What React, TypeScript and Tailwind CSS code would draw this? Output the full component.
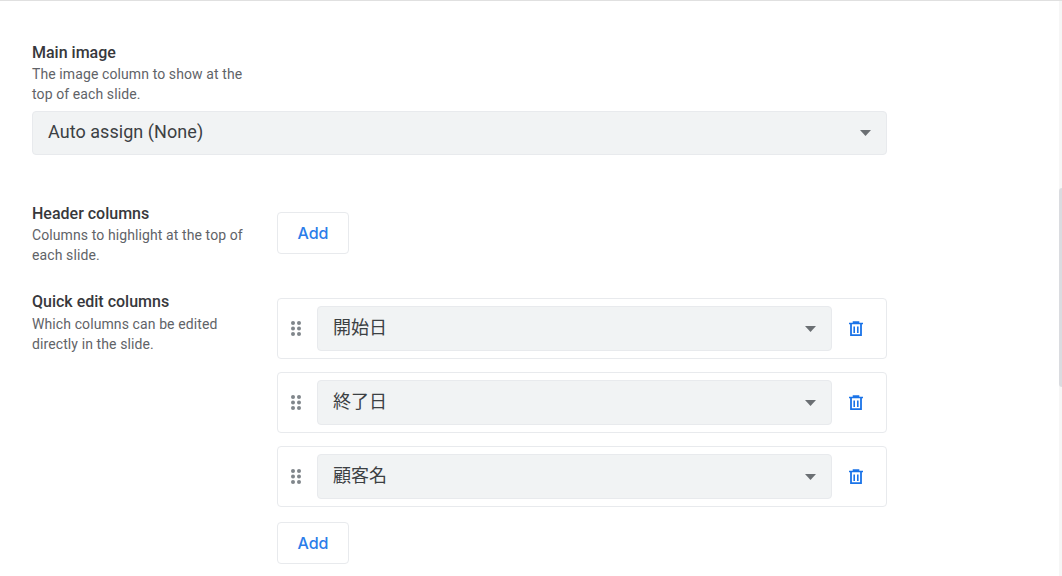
import React from 'react';

function Caret() {
  return (
    <svg width="11" height="6" viewBox="0 0 11 6" className="shrink-0">
      <path d="M0 0h11L5.5 6z" fill="#6b6f73" />
    </svg>
  );
}

function Select({ label, className, textClass }: { label: string; className: string; textClass: string }) {
  return (
    <div className={`flex items-center justify-between bg-[#f1f3f4] border border-[#e8eaed] rounded px-[15px] text-[#3c4043] text-[18px] tracking-[0.05px] ${className}`}>
      <span className={textClass}>{label}</span>
      <Caret />
    </div>
  );
}

function AddButton() {
  return (
    <button
      className="w-[72px] h-[42px] bg-white border border-[#e8eaed] rounded text-[16px] font-medium text-[#2b7de9]"
      style={{ fontFamily: 'Inter, sans-serif' }}
    >
      Add
    </button>
  );
}

function Label({ title, desc, gap }: { title: string; desc: string[]; gap: string }) {
  return (
    <div>
      <div className="text-[16px] leading-5 font-medium text-[#37383c]">{title}</div>
      <div className={`${gap} text-[14px] leading-5 tracking-[0.1px] text-[#5f6368]`}>
        {desc.map((d) => (
          <div key={d}>{d}</div>
        ))}
      </div>
    </div>
  );
}

function Handle() {
  return (
    <svg width="10" height="15" viewBox="0 0 10 15" className="shrink-0">
      {[2, 7.5, 13].map((y) =>
        [2, 8].map((x) => <circle key={`${x}-${y}`} cx={x} cy={y} r="2" fill="#80868b" />)
      )}
    </svg>
  );
}

function Trash() {
  return (
    <svg width="14" height="16" viewBox="0 0 14 16" fill="none" stroke="#1a73e8" className="shrink-0">
      <path d="M0 2.5h14M4.5 2.5V1h5v1.5" strokeWidth="1.6" />
      <path d="M2 3v11.2h10V3" strokeWidth="1.8" />
      <path d="M5.2 5.5v6.5M8.8 5.5v6.5" strokeWidth="1.6" />
    </svg>
  );
}

function ColumnRow({ name }: { name: string }) {
  return (
    <div className="flex items-center h-[61px] bg-white border border-[#e8eaed] rounded pl-[13px] pr-[23px]">
      <Handle />
      <Select label={name} textClass="pb-[2px]" className="flex-1 h-[45px] ml-[16px] mr-[17px]" />
      <Trash />
    </div>
  );
}

export default function App() {
  return (
    <div
      className="flex h-[576px] w-[1062px] overflow-hidden bg-white border-t border-[#e0e0e0]"
      style={{ fontFamily: 'Roboto, "Noto Sans CJK JP", sans-serif' }}
    >
      <main className="flex-1 pl-8 pt-[42px]">
        <div className="w-[855px]">
          <Label title="Main image" gap="mt-[1px]" desc={['The image column to show at the', 'top of each slide.']} />
          <Select label="Auto assign (None)" textClass="pb-[3px]" className="h-[44px] mt-[7px]" />

          <div className="flex mt-[49px]">
            <div className="w-[245px]">
              <Label title="Header columns" gap="mt-[1px]" desc={['Columns to highlight at the top of', 'each slide.']} />
            </div>
            <div className="pt-[8px]">
              <AddButton />
            </div>
          </div>

          <div className="flex mt-[27px]">
            <div className="w-[245px]">
              <Label title="Quick edit columns" gap="mt-[2px]" desc={['Which columns can be edited', 'directly in the slide.']} />
            </div>
            <div className="flex-1 flex flex-col gap-[13px] pt-[6px]">
              <ColumnRow name="開始日" />
              <ColumnRow name="終了日" />
              <ColumnRow name="顧客名" />
              <div className="mt-[2px]">
                <AddButton />
              </div>
            </div>
          </div>
        </div>
      </main>
      <div className="w-[3px] h-full bg-[#f6f6f6] pt-[187px]">
        <div className="h-[199px] bg-[#dadce0] rounded-l-sm" />
      </div>
    </div>
  );
}
